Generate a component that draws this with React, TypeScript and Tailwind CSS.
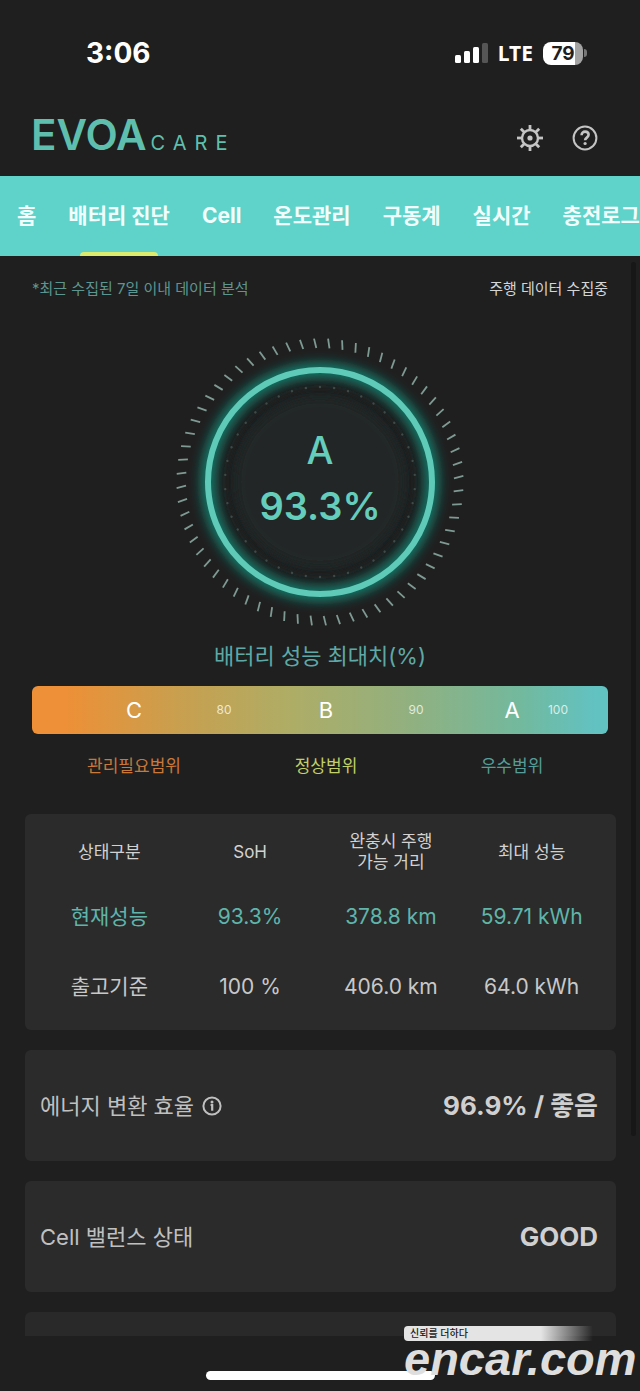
type Tab = { label: string; active?: boolean }

const tabs: Tab[] = [
  { label: "홈" },
  { label: "배터리 진단", active: true },
  { label: "Cell" },
  { label: "온도관리" },
  { label: "구동계" },
  { label: "실시간" },
  { label: "충전로그" },
]

const OUTER_TICKS = 64
const INNER_DOTS = 42

function StatusBar() {
  return (
    <div className="flex h-[100px] items-center justify-between pt-[6px] pl-[86px] pr-[53px] text-white">
      <span className="text-[28px] leading-8 font-bold">3:06</span>
      <div className="flex items-center gap-[10px]">
        <svg width="33" height="20" viewBox="0 0 33 20" aria-hidden="true">
          <rect x="0" y="12" width="6" height="8" rx="1.5" fill="#fff" />
          <rect x="9" y="8" width="6" height="12" rx="1.5" fill="#fff" />
          <rect x="18" y="4" width="6" height="16" rx="1.5" fill="#fff" />
          <rect x="27" y="0" width="6" height="20" rx="1.5" fill="#555" />
        </svg>
        <span className="font-['Noto_Sans',sans-serif] text-[21px] leading-6 font-bold">LTE</span>
        <div className="flex items-center gap-px">
          <span className="flex h-[23px] w-10 items-center justify-center rounded-lg bg-[linear-gradient(to_right,#fff_79%,#a3a3a3_79%)] text-[19px] leading-[23px] font-bold text-[#1f1f1f]">
            79
          </span>
          <span className="h-2 w-[3px] rounded-r-full bg-[#777]" />
        </div>
      </div>
    </div>
  )
}

function Header() {
  return (
    <header className="flex h-[76px] items-center justify-between pl-[31px] pr-[42px]">
      <a href="#home" className="flex items-baseline gap-1 text-[#5fbfae]">
        <span className="text-[42px] leading-[44px] font-semibold">EVOA</span>
        <span className="text-[20px] leading-10 tracking-[8px]">CARE</span>
      </a>
      <div className="flex items-center gap-7 text-[#c4c4c4]">
        <button type="button" aria-label="설정">
          <svg width="28" height="28" viewBox="0 0 28 28" fill="none" stroke="currentColor">
            <circle cx="14" cy="14" r="8" strokeWidth="2.4" />
            <circle cx="14" cy="14" r="2.6" fill="currentColor" stroke="none" />
            {[0, 45, 90, 135, 180, 225, 270, 315].map((deg) => (
              <line key={deg} x1="14" y1="1" x2="14" y2="6" strokeWidth="2.8" transform={`rotate(${deg} 14 14)`} />
            ))}
          </svg>
        </button>
        <button type="button" aria-label="도움말">
          <svg width="26" height="26" viewBox="0 0 26 26" fill="none" stroke="currentColor">
            <circle cx="13" cy="13" r="11.4" strokeWidth="2" />
            <path d="M9.6 10.2c0-2.200 1.500-3.600 3.500-3.600s3.500 1.300 3.500 3.200c0 2.700-3.500 2.900-3.500 5.400" strokeWidth="2.6" />
            <circle cx="13.1" cy="18.500" r="1.600" fill="currentColor" stroke="none" />
          </svg>
        </button>
      </div>
    </header>
  )
}

function Tabs() {
  return (
    <nav className="flex h-20 gap-8 overflow-hidden bg-[#5fd3c9] pl-[17px]">
      {tabs.map((tab) => (
        <a
          key={tab.label}
          href="#tab"
          aria-current={tab.active ? "page" : undefined}
          className="relative flex shrink-0 items-center text-[21px] leading-8 font-bold whitespace-nowrap text-[#f1fffd]"
        >
          {tab.label}
          {tab.active && <span className="absolute inset-x-3 bottom-0 h-1 rounded-t-sm bg-[#dcea6e]" />}
        </a>
      ))}
    </nav>
  )
}

function Gauge() {
  return (
    <div className="relative mx-auto size-[300px]">
      <svg className="size-full" viewBox="0 0 300 300" fill="none" aria-hidden="true">
        <defs>
          <filter id="glow" x="-20%" y="-20%" width="140%" height="140%">
            <feGaussianBlur stdDeviation="6" />
          </filter>
          <filter id="soft" x="-20%" y="-20%" width="140%" height="140%">
            <feGaussianBlur stdDeviation="4" />
          </filter>
        </defs>
        {Array.from({ length: OUTER_TICKS }, (_, i) => (
          <line
            key={i}
            x1="149"
            y1="6.500"
            x2="151"
            y2="16"
            stroke="#7f9a93"
            strokeWidth="1.800"
            transform={`rotate(${(i * 360) / OUTER_TICKS - 2} 150 150)`}
          />
        ))}
        <circle cx="150" cy="150" r="112" stroke="#12806f" strokeWidth="14" filter="url(#glow)" />
        <circle cx="150" cy="150" r="92" fill="#1e2222" filter="url(#soft)" />
        <circle cx="150" cy="150" r="84" fill="#202828" filter="url(#soft)" />
        {Array.from({ length: INNER_DOTS }, (_, i) => (
          <circle
            key={i}
            cx="150"
            cy="55"
            r="1.200"
            fill="#3f4a48"
            transform={`rotate(${(i * 360) / INNER_DOTS} 150 150)`}
          />
        ))}
        <circle cx="150" cy="150" r="112" stroke="#60cab8" strokeWidth="6" />
      </svg>
      <div className="absolute inset-0 flex flex-col items-center justify-center gap-2 pb-2 text-[#65cdbb]">
        <span className="text-[38px] leading-[48px] font-medium">A</span>
        <span className="text-[38px] leading-[48px] font-semibold">93.3%</span>
      </div>
    </div>
  )
}

function GradeScale() {
  return (
    <>
      <div className="relative mx-8 mt-[14px] grid h-12 grid-cols-3 items-center rounded-md bg-[linear-gradient(to_right,#ed9037_0%,#ed9037_6%,#c99f4e_25%,#aead66_45%,#92b07f_65%,#72b99e_85%,#62c2c2_98%)] text-center text-[22px] leading-8 text-white">
        <span className="pl-3">C</span>
        <span className="pl-3">B</span>
        <span>A</span>
        <span className="absolute left-1/3 -translate-x-1/2 text-xs text-white/75">80</span>
        <span className="absolute left-2/3 -translate-x-1/2 text-xs text-white/75">90</span>
        <span className="absolute right-10 text-xs text-white/75">100</span>
      </div>
      <div className="mx-8 mt-4 grid grid-cols-3 text-center text-[17px] leading-8">
        <span className="pl-3 text-[#c9783a]">관리필요범위</span>
        <span className="pl-3 text-[#c3cf67]">정상범위</span>
        <span className="text-[#569c98]">우수범위</span>
      </div>
    </>
  )
}

function StatusTable() {
  return (
    <div className="rounded-md bg-[#2b2b2b] px-[14px] py-2">
      <table className="w-full table-fixed text-center text-[21px] leading-7">
        <thead>
          <tr className="h-[60px] text-[17px] leading-[21px] text-[#d2d2d2]">
            <th className="font-normal">상태구분</th>
            <th className="font-normal">SoH</th>
            <th className="font-normal">
              완충시 주행
              <br />
              가능 거리
            </th>
            <th className="font-normal">최대 성능</th>
          </tr>
        </thead>
        <tbody>
          <tr className="h-[70px] text-[#5fb5aa]">
            <td>현재성능</td>
            <td>93.3%</td>
            <td>378.8 km</td>
            <td>59.71 kWh</td>
          </tr>
          <tr className="h-[70px] text-[#c8c8c8]">
            <td>출고기준</td>
            <td>100 %</td>
            <td>406.0 km</td>
            <td>64.0 kWh</td>
          </tr>
        </tbody>
      </table>
    </div>
  )
}

function InfoCard({ label, value, info }: { label: string; value: string; info?: boolean }) {
  return (
    <div className="flex h-[111px] items-center justify-between rounded-md bg-[#2b2b2b] pl-[15px] pr-[18px]">
      <div className="flex items-center gap-2 text-[22px] leading-8 text-[#c0c0c0]">
        {label}
        {info && (
          <button type="button" aria-label="정보">
            <svg width="20" height="20" viewBox="0 0 20 20" fill="none" stroke="currentColor">
              <circle cx="10" cy="10" r="8.600" strokeWidth="2" />
              <circle cx="10" cy="5.900" r="1.500" fill="currentColor" stroke="none" />
              <path d="M8.600 9h1.600v5.800" strokeWidth="2.200" />
            </svg>
          </button>
        )}
      </div>
      <strong className="text-[26px] leading-8 font-bold text-[#d0d0d0]">{value}</strong>
    </div>
  )
}

function Watermark() {
  return (
    <div className="absolute right-0 bottom-[15px] w-[236px]">
      <div className="h-[15px] rounded-sm bg-[linear-gradient(to_right,#e4e4e4_58%,transparent_80%)] pl-[6px] text-[10px] leading-[15px] font-medium text-[#222]">
        신뢰를 더하다
      </div>
      <div className="font-['Liberation_Sans',sans-serif] text-[47px] leading-[35px] font-bold text-[#dedede] italic">
        encar.com
      </div>
    </div>
  )
}

export default function App() {
  return (
    <div className="relative flex min-h-screen flex-col overflow-hidden bg-[#1f1f1f] font-[Inter,'Noto_Sans_CJK_KR',sans-serif]">
      <StatusBar />
      <Header />
      <Tabs />

      <main className="relative">
        <div className="flex items-center justify-between px-8 pt-5 text-[15px] leading-[26px]">
          <span className="text-[#5d9690]">*최근 수집된 7일 이내 데이터 분석</span>
          <span className="text-[#d5d5d5]">주행 데이터 수집중</span>
        </div>

        <div className="mt-[30px]">
          <Gauge />
        </div>
        <h1 className="mt-2 text-center text-[22px] leading-8 text-[#5da9a7]">배터리 성능 최대치(%)</h1>
        <GradeScale />

        <section className="mt-8 flex flex-col gap-5 pl-[25px] pr-6">
          <StatusTable />
          <InfoCard label="에너지 변환 효율" value="96.9% / 좋음" info />
          <InfoCard label="Cell 밸런스 상태" value="GOOD" />
          <div className="h-6 rounded-t-md bg-[#292929]" />
        </section>

        {/* Scroll thumb */}
        <div className="absolute top-[6px] right-1 h-[874px] w-[5px] rounded-full bg-[#171717]" />
      </main>

      <footer className="mt-auto flex justify-center pb-[11px]">
        <div className="h-[9px] w-[229px] rounded-full bg-white" />
      </footer>
      <Watermark />
    </div>
  )
}
